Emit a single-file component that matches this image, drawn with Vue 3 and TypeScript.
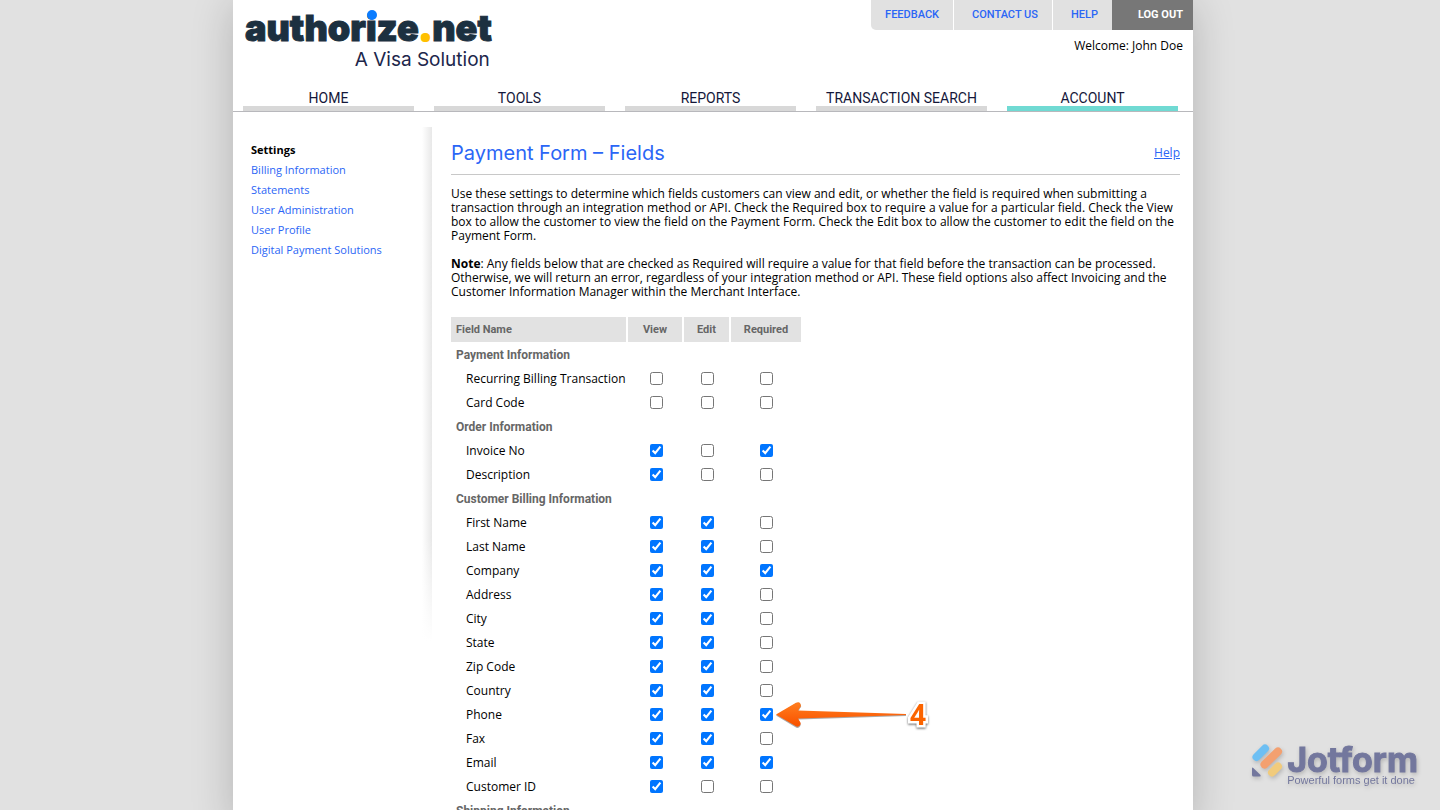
<script setup lang="ts">
interface Field {
  name: string
  view: boolean
  edit: boolean
  required: boolean
  step?: string
}

interface Section {
  title: string
  fields: Field[]
}

type Column = 'view' | 'edit' | 'required'

const columns: { key: Column; label: string }[] = [
  { key: 'view', label: 'View' },
  { key: 'edit', label: 'Edit' },
  { key: 'required', label: 'Required' },
]

const field = (name: string, flags: string, step?: string): Field => ({
  name,
  view: flags.includes('v'),
  edit: flags.includes('e'),
  required: flags.includes('r'),
  step,
})

const sections: Section[] = [
  {
    title: 'Payment Information',
    fields: [field('Recurring Billing Transaction', ''), field('Card Code', '')],
  },
  {
    title: 'Order Information',
    fields: [field('Invoice No', 'vr'), field('Description', 'v')],
  },
  {
    title: 'Customer Billing Information',
    fields: [
      field('First Name', 've'),
      field('Last Name', 've'),
      field('Company', 'ver'),
      field('Address', 've'),
      field('City', 've'),
      field('State', 've'),
      field('Zip Code', 've'),
      field('Country', 've'),
      field('Phone', 'ver', '4'),
      field('Fax', 've'),
      field('Email', 'ver'),
      field('Customer ID', 'v'),
    ],
  },
  { title: 'Shipping Information', fields: [] },
]

const tabs = ['HOME', 'TOOLS', 'REPORTS', 'TRANSACTION SEARCH', 'ACCOUNT']
const activeTab = 'ACCOUNT'

const settings = [
  'Billing Information',
  'Statements',
  'User Administration',
  'User Profile',
  'Digital Payment Solutions',
]

const slug = (text: string): string => text.toLowerCase().replace(/\s+/g, '-')
</script>

<template>
  <div class="page">
    <div class="sheet">
      <header class="top">
        <a class="brand" href="#">
          <span class="brand-name">author<span class="brand-i">i</span>ze<span class="brand-dot">.</span>net</span>
          <span class="brand-sub">A Visa Solution</span>
        </a>
        <div class="account">
          <nav class="utility">
            <a href="#">FEEDBACK</a>
            <a href="#">CONTACT US</a>
            <a href="#">HELP</a>
            <a href="#" class="logout">LOG OUT</a>
          </nav>
          <p class="welcome">Welcome: John Doe</p>
        </div>
      </header>

      <nav class="tabs">
        <a v-for="tab in tabs" :key="tab" href="#" :class="{ active: tab === activeTab }">{{ tab }}</a>
      </nav>

      <div class="body">
        <aside class="side">
          <h2>Settings</h2>
          <ul>
            <li v-for="item in settings" :key="item"><a href="#">{{ item }}</a></li>
          </ul>
        </aside>

        <main class="content">
          <div class="heading">
            <h1>Payment Form – Fields</h1>
            <a href="#">Help</a>
          </div>
          <p>
            Use these settings to determine which fields customers can view and edit, or whether the field is required when submitting a
            transaction through an integration method or API. Check the Required box to require a value for a particular field. Check the View
            box to allow the customer to view the field on the Payment Form. Check the Edit box to allow the customer to edit the field on the
            Payment Form.
          </p>
          <p>
            <b>Note</b>: Any fields below that are checked as Required will require a value for that field before the transaction can be processed.
            Otherwise, we will return an error, regardless of your integration method or API. These field options also affect Invoicing and the
            Customer Information Manager within the Merchant Interface.
          </p>

          <table>
            <colgroup>
              <col class="col-name" />
              <col class="col-view" />
              <col class="col-edit" />
              <col class="col-required" />
            </colgroup>
            <thead>
              <tr>
                <th scope="col" class="name">Field Name</th>
                <th v-for="col in columns" :id="col.key" :key="col.key" scope="col">{{ col.label }}</th>
              </tr>
            </thead>
            <tbody v-for="section in sections" :key="section.title">
              <tr>
                <th colspan="4" scope="rowgroup" class="group">{{ section.title }}</th>
              </tr>
              <tr v-for="row in section.fields" :key="row.name">
                <th :id="slug(row.name)" scope="row" class="row-name">{{ row.name }}</th>
                <td v-for="col in columns" :key="col.key" :class="col.key">
                  <input v-model="row[col.key]" type="checkbox" :aria-labelledby="`${slug(row.name)} ${col.key}`" />
                  <span v-if="row.step && col.key === 'required'" class="callout">
                    <svg width="132" height="30" viewBox="0 0 132 30" aria-hidden="true">
                      <defs>
                        <linearGradient id="arrow-fill" x1="0" y1="0" x2="0" y2="1">
                          <stop offset="0.1" stop-color="#ff7a1c" />
                          <stop offset="0.9" stop-color="#f95400" />
                        </linearGradient>
                      </defs>
                      <path class="arrow-shade" d="M1 15.5 21 3.2q3-1.400 4.500 1t-.5 4l-1.600 3.300L131 15v1L23.400 19.500l1.600 3.300q1.500 2.500-.5 4.200t-4 .3Z" />
                      <path fill="url(#arrow-fill)" d="M1 14.500 21 2.700q3-1.400 4.300.7t-.3 4l-1.900 3.200L131 14v1L23.100 18.500l1.900 3.300q1.500 2.300-.5 4t-4 .3Z" />
                    </svg>
                    <span class="step">{{ row.step }}</span>
                  </span>
                </td>
              </tr>
            </tbody>
          </table>
        </main>
      </div>
    </div>

    <div class="watermark">
      <svg width="32" height="34" viewBox="0 0 32 34" aria-hidden="true">
        <g fill="none" stroke-linecap="round">
          <path stroke="#6dbff3" stroke-width="8" d="M4.500 13 13 4.500" />
          <path stroke="#f3a070" stroke-width="8" d="M12.500 20.500 26 7.500" />
          <path stroke="#f1cb7c" stroke-width="8" d="M20 28.500 26 22.500" />
        </g>
        <path fill="#73779d" d="M0 24.500q0-1.500 1.300-.6L8.500 31q.8 1.500-.8 1.500H1.500Q0 32.500 0 31Z" />
      </svg>
      <div class="watermark-text">
        <span class="watermark-name">Jotform</span>
        <span class="watermark-sub">Powerful forms get it done</span>
      </div>
    </div>
  </div>
</template>

<style>
body {
  margin: 0;
  background: #e1e1e1;
}
</style>

<style scoped>
.page {
  box-sizing: border-box;
  height: 100vh;
  overflow: hidden;
  padding-right: 14px;
  background: #e1e1e1;
  color: #000;
  font-family: "Open Sans", "Liberation Sans", sans-serif;
  font-size: 12px;
  font-weight: 500;
  line-height: 14px;
}

a {
  color: #2b66f6;
  text-decoration: none;
}

.sheet {
  max-width: 960px;
  min-height: 100%;
  margin: 0 auto;
  background: #fff;
  box-shadow: 0 4px 40px rgba(0, 0, 0, 0.2);
}

.top {
  display: flex;
  justify-content: space-between;
  height: 88px;
}

.brand {
  display: flex;
  flex-direction: column;
  align-items: flex-end;
  padding: 8px 0 0 12px;
  font-family: Inter, sans-serif;
}

.brand-name {
  color: #1c3040;
  font-size: 36px;
  font-weight: 900;
  line-height: 40px;
  -webkit-text-stroke: 1px currentColor;
  stroke-linejoin: round;
}

.brand-i {
  position: relative;
}

.brand-i::after {
  content: "";
  position: absolute;
  top: 4px;
  left: 1px;
  width: 10px;
  height: 10px;
  border-radius: 50%;
  background: #0a7cff;
}

.brand-dot {
  color: #ffc000;
  -webkit-text-stroke: 2px #ffc000;
}

.brand-sub {
  padding-right: 2px;
  color: #20264b;
  font-size: 19px;
  font-weight: 400;
  line-height: 24px;
}

.account {
  display: flex;
  flex-direction: column;
  align-items: flex-end;
}

.utility {
  display: flex;
  overflow: hidden;
  border-bottom-left-radius: 5px;
  font-family: Roboto, sans-serif;
  font-size: 11px;
  font-weight: 500;
  line-height: 30px;
}

.utility a {
  padding: 0 14px;
  background: #e1e1e1;
}

.utility a + a {
  padding-left: 18px;
  border-left: 1px solid #fff;
}

.utility a.logout {
  padding: 0 10px 0 26px;
  border-left: 0;
  background: #777;
  color: #fff;
  font-weight: 700;
}

.welcome {
  margin: 9px 10px 0 0;
}

.tabs {
  display: grid;
  grid-template-columns: repeat(5, 1fr);
  gap: 20px;
  padding: 0 15px 0 10px;
  border-bottom: 1px solid #b8b8bc;
}

.tabs a {
  padding-top: 2px;
  border-bottom: 5px solid #d8d8d8;
  color: #14173a;
  font-family: Roboto, sans-serif;
  font-size: 14px;
  font-weight: 400;
  line-height: 16px;
  text-align: center;
}

.tabs .active {
  border-color: #70dad3;
}

.body {
  display: flex;
  padding-top: 15px;
}

.side {
  box-sizing: border-box;
  flex: 0 0 199px;
  height: 514px;
  padding: 13px 0 0 18px;
  background: linear-gradient(transparent 80%, #fff), linear-gradient(to left, #e8e8e8, #fff 10px);
  font-size: 11px;
  line-height: 20px;
}

.side h2 {
  margin: 0;
  font-size: 11px;
  font-weight: 700;
}

.side ul {
  margin: 0;
  padding: 0;
  list-style: none;
}

.content {
  flex: 1;
  padding: 12px 13px 0 19px;
}

.heading {
  display: flex;
  align-items: center;
  justify-content: space-between;
  height: 35px;
  margin-bottom: 12px;
  border-bottom: 1px solid #c8c8c8;
}

.heading h1 {
  margin: 0 0 8px;
  color: #2b66f6;
  font-family: Inter, sans-serif;
  font-size: 20px;
  font-weight: 400;
  line-height: 28px;
}

.heading a {
  margin-bottom: 8px;
  text-decoration: underline;
}

.content p {
  margin: 0 0 14px;
}

b {
  font-weight: 700;
}

table {
  width: 354px;
  margin: 16px 0 0 -2px;
  border-spacing: 2px;
  table-layout: fixed;
}

.col-name {
  width: 175px;
}

.col-view {
  width: 54px;
}

.col-edit {
  width: 45px;
}

.col-required {
  width: 70px;
}

th,
td {
  height: 22px;
  padding: 0;
  text-align: center;
}

thead th {
  height: 25px;
  background: #e2e2e2;
  color: #666;
  font-family: Roboto, sans-serif;
  font-size: 11px;
  font-weight: 700;
}

thead .name,
.group {
  padding-left: 5px;
  text-align: left;
}

.group {
  color: #666;
  font-family: Roboto, sans-serif;
  font-weight: 700;
}

.row-name {
  padding-left: 15px;
  font-weight: 500;
  text-align: left;
  white-space: nowrap;
}

td {
  position: relative;
}

.view,
.edit {
  padding-left: 2px;
}

input {
  display: block;
  width: 13px;
  height: 13px;
  margin: 0 auto 1px;
}

.callout {
  position: absolute;
  top: -4px;
  left: 44px;
  display: flex;
  gap: 3px;
}

.arrow-shade {
  fill: #555;
  opacity: 0.5;
}

.step {
  color: #fb6400;
  font-family: "Open Sans", sans-serif;
  font-size: 28px;
  font-weight: 700;
  line-height: 28px;
  paint-order: stroke;
  -webkit-text-stroke: 5px #fff;
  filter: drop-shadow(0 1px 1px rgba(0, 0, 0, 0.6));
}

.watermark {
  position: fixed;
  right: 22px;
  bottom: 24px;
  display: flex;
  gap: 3px;
  color: #73779d;
  filter: drop-shadow(1px 2px 2px rgba(0, 0, 0, 0.2));
}

.watermark-text {
  display: flex;
  flex-direction: column;
}

.watermark-name {
  font-family: Inter, sans-serif;
  font-size: 34px;
  font-weight: 700;
  line-height: 32px;
  -webkit-text-stroke: 1px currentColor;
}

.watermark-sub {
  margin-top: -2px;
  font-family: "Liberation Sans", Arial, sans-serif;
  font-size: 11px;
  font-weight: 400;
  line-height: 12px;
}
</style>
